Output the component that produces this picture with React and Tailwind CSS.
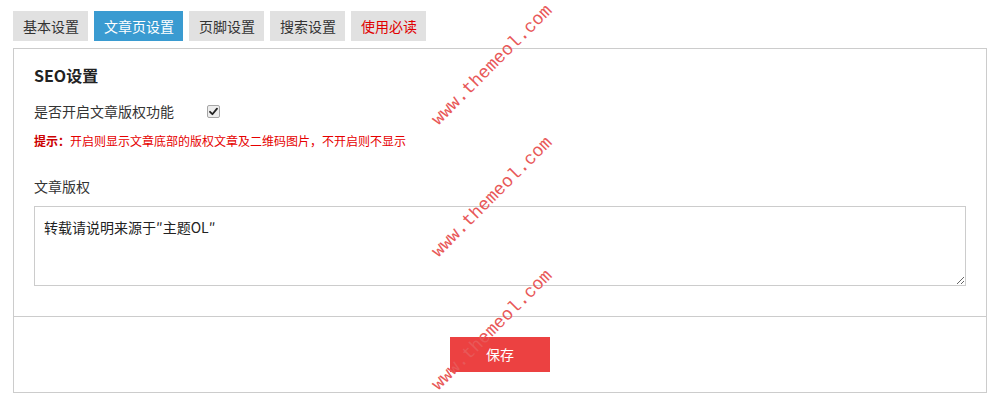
import React from "react";

const cjk = { fontFamily: '"Noto Sans CJK SC", "Noto Sans", sans-serif' };

function Tab({ children, active, red }) {
  return (
    <div
      className={
        "h-[30px] pl-[10px] pr-[9px] flex items-center text-[14px] " +
        (active ? "bg-[#3a9bd1] text-white" : "bg-[#e1e1e1] " + (red ? "text-[#e00000]" : "text-[#333]"))
      }
    >
      {children}
    </div>
  );
}

function Watermark({ className }) {
  return (
    <div
      className={
        "absolute -translate-x-1/2 -translate-y-1/2 -rotate-45 whitespace-nowrap text-[18px] leading-none text-[#e85858] pointer-events-none " +
        className
      }
      style={{ fontFamily: '"Liberation Mono", "DejaVu Sans Mono", monospace' }}
    >
      www.themeol.com
    </div>
  );
}

export default function App() {
  return (
    <div className="relative w-[997px] h-[406px] bg-white text-[#333] overflow-hidden" style={cjk}>
      <div className="pt-[11px] pl-[13px] pr-[10px]">
        <div className="flex gap-[6px]">
          <Tab>基本设置</Tab>
          <Tab active>文章页设置</Tab>
          <Tab>页脚设置</Tab>
          <Tab>搜索设置</Tab>
          <Tab red>使用必读</Tab>
        </div>
        <div className="mt-[7px] border border-[#cccccc]">
          <div className="px-[20px] pt-[14px] pb-[30px] border-b border-[#cccccc]">
            <div className="h-6 flex items-center text-[16px] font-bold text-[#222]">SEO设置</div>
            <div className="mt-[14px] h-5 flex items-center text-[14px]">
              <span className="w-[173px]">是否开启文章版权功能</span>
              <span className="w-[13px] h-[13px] border border-[#a6a6a6] bg-[#ededed] rounded-[2px] flex items-center justify-center">
                <svg width="9" height="9" viewBox="0 0 9 9">
                  <path d="M1 4.8 L3.4 7.2 L8 1.6" fill="none" stroke="#222" strokeWidth="1.8" strokeLinecap="round" strokeLinejoin="round" />
                </svg>
              </span>
            </div>
            <div className="mt-3 text-[12px] leading-4 text-[#e60000]">
              <span className="font-bold text-[#cc0000]">提示：</span>开启则显示文章底部的版权文章及二维码图片，不开启则不显示
            </div>
            <div className="mt-[27px] h-5 flex items-center text-[14px]">文章版权</div>
            <textarea
              className="mt-[10px] block w-full h-[80px] border border-[#cccccc] px-[9px] py-[8px] text-[14px] leading-[24px] text-[#222] outline-none"
              style={cjk}
              defaultValue="转载请说明来源于″主题OL″"
            />
          </div>
          <div className="pt-5 pb-5 flex justify-center">
            <button className="w-[100px] h-[35px] bg-[#ec4141] text-white text-[14px] flex items-center justify-center">
              保存
            </button>
          </div>
        </div>
      </div>
      <Watermark className="left-[492px] top-[65px]" />
      <Watermark className="left-[492px] top-[197px]" />
      <Watermark className="left-[492px] top-[330px]" />
    </div>
  );
}
